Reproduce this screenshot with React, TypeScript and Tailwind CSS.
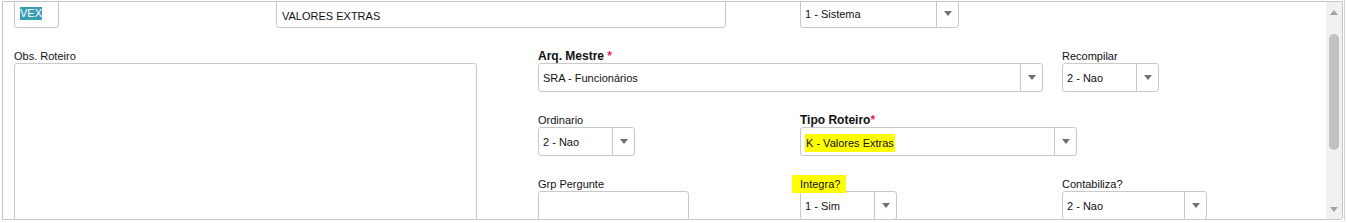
import React from "react";

function Label({ children }: { children?: React.ReactNode }) {
  return <div className="h-[14px] leading-[14px] text-[11px] text-[#111] whitespace-nowrap">{children}</div>;
}

function Arrow() {
  return (
    <svg width="8" height="5" viewBox="0 0 8 5" className="block">
      <path d="M0 0 H8 L4 5 Z" fill="#707070" />
    </svg>
  );
}

function SelectBox({ value, w, hl }: { value: string; w: string; hl?: boolean }) {
  return (
    <div className={`${w} h-[29px] border border-[#c9c9c9] rounded-[3px] bg-white flex`}>
      <div className="flex-1 flex items-center pl-[4px] pt-[2px] text-[11px] text-[#111] whitespace-nowrap overflow-hidden">
        <span className={hl ? "bg-[#ffff00] px-[1px] py-[2px] leading-[14px]" : ""}>{value}</span>
      </div>
      <div className="w-[22px] border-l border-[#c9c9c9] flex items-center justify-center">
        <Arrow />
      </div>
    </div>
  );
}

function TextBox({ value, w, h = "h-[29px]", children }: { value?: string; w: string; h?: string; children?: React.ReactNode }) {
  return (
    <div className={`${w} ${h} border border-[#c9c9c9] rounded-[3px] bg-white flex items-start pl-[5px] pt-[8px] text-[11px] text-[#111] whitespace-nowrap`}>
      {children ?? value}
    </div>
  );
}

export default function App() {
  return (
    <div className="w-[1347px] h-[223px] bg-white font-['Liberation_Sans',Arial,sans-serif] relative">
      <div className="flex">
        <div className="ml-[2px] mt-[1px] w-[1341px] h-[219px] border border-[#c6c6c6] rounded-br-[3px] flex overflow-hidden">
          <div className="flex-1 overflow-hidden">
            <div className="mt-[-17px] pl-[11px] grid grid-cols-[repeat(5,262px)] grid-rows-[43px_43px_43px_43px] gap-y-[21px]">
              {/* row 1 */}
              <div className="col-start-1 row-start-1">
                <Label />
                <TextBox w="w-[45px]">
                  <span className="bg-[#3a9db4] text-white leading-[13px] -mt-[1px]">VEX</span>
                </TextBox>
              </div>
              <div className="col-start-2 col-span-2 row-start-1">
                <Label />
                <TextBox w="w-[450px]" value="VALORES EXTRAS" />
              </div>
              <div className="col-start-4 row-start-1">
                <Label />
                <SelectBox w="w-[159px]" value="1 - Sistema" />
              </div>

              {/* row 2 */}
              <div className="col-start-1 col-span-2 row-start-2 row-span-3">
                <Label>Obs. Roteiro</Label>
                <div className="w-[463px] h-[200px] border border-[#c9c9c9] rounded-[3px] bg-white" />
              </div>
              <div className="col-start-3 col-span-2 row-start-2">
                <div className="h-[14px] leading-[14px] text-[12px] font-bold text-[#111] whitespace-nowrap">
                  Arq. Mestre <span className="text-[#e2264d]">*</span>
                </div>
                <SelectBox w="w-[505px]" value="SRA - Funcionários" />
              </div>
              <div className="col-start-5 row-start-2">
                <Label>Recompilar</Label>
                <SelectBox w="w-[97px]" value="2 - Nao" />
              </div>

              {/* row 3 */}
              <div className="col-start-3 row-start-3">
                <Label>Ordinario</Label>
                <SelectBox w="w-[97px]" value="2 - Nao" />
              </div>
              <div className="col-start-4 col-span-2 row-start-3">
                <div className="h-[14px] leading-[14px] text-[12px] font-bold text-[#111] whitespace-nowrap">
                  Tipo Roteiro<span className="text-[#e2264d]">*</span>
                </div>
                <SelectBox w="w-[277px]" value="K - Valores Extras" hl />
              </div>

              {/* row 4 */}
              <div className="col-start-3 row-start-4">
                <Label>Grp Pergunte</Label>
                <TextBox w="w-[151px]" h="h-[60px]" value="" />
              </div>
              <div className="col-start-4 row-start-4">
                <div className="h-[14px] leading-[14px] text-[11px] text-[#111] whitespace-nowrap">
                  <span className="bg-[#ffff00] ml-[-8px] pl-[8px] pr-[6px] pt-[3px] pb-[3px]">Integra?</span>
                </div>
                <SelectBox w="w-[97px]" value="1 - Sim" />
              </div>
              <div className="col-start-5 row-start-4">
                <Label>Contabiliza?</Label>
                <SelectBox w="w-[145px]" value="2 - Nao" />
              </div>
            </div>
          </div>
          {/* scrollbar */}
          <div className="w-[16px] h-full bg-[#f1f1f1] flex flex-col items-center">
            <div className="h-[20px] flex items-center justify-center">
              <svg width="8" height="5" viewBox="0 0 8 5"><path d="M0 5 H8 L4 0 Z" fill="#a3a3a3" /></svg>
            </div>
            <div className="mt-[12px] w-[10px] h-[116px] rounded-full bg-[#c1c1c1]" />
            <div className="flex-1" />
            <div className="h-[20px] flex items-center justify-center">
              <svg width="8" height="5" viewBox="0 0 8 5"><path d="M0 0 H8 L4 5 Z" fill="#a3a3a3" /></svg>
            </div>
          </div>
        </div>
        <div className="ml-[1px] w-px h-[221px] bg-[#d4d4d4]" />
      </div>
    </div>
  );
}
